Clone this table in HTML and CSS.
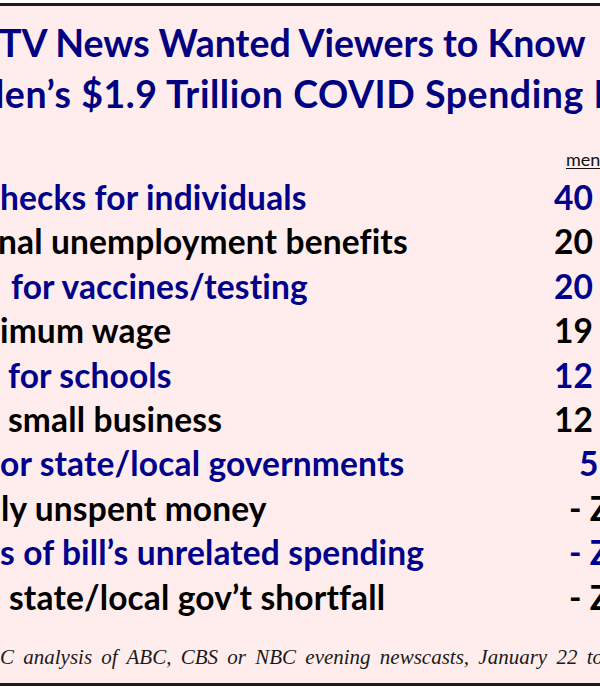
FILE: index.html
```html
<!DOCTYPE html>
<html>
<head>
<meta charset="utf-8">
<link rel="stylesheet" href="styles.css">
</head>
<body>
<div class="frame">
  <div class="title">
    <div class="tline t1">TV News Wanted Viewers to Know</div>
    <div class="tline t2">den’s $1.9 Trillion COVID Spending B</div>
  </div>
  <div class="head"><span class="mentions">mentions</span></div>
  <div class="rows">
    <div class="row blue"><span class="label l1">hecks for individuals</span><span class="num">40</span></div>
    <div class="row black"><span class="label l2">nal unemployment benefits</span><span class="num">20</span></div>
    <div class="row blue"><span class="label l3">for vaccines/testing</span><span class="num">20</span></div>
    <div class="row black"><span class="label l4">imum wage</span><span class="num">19</span></div>
    <div class="row blue"><span class="label l5">for schools</span><span class="num">12</span></div>
    <div class="row black"><span class="label l6">small business</span><span class="num">12</span></div>
    <div class="row blue"><span class="label l7">or state/local governments</span><span class="num n5">5</span></div>
    <div class="row black"><span class="label l8">ly unspent money</span><span class="num nz">- Z</span></div>
    <div class="row blue"><span class="label l9">s of bill’s unrelated spending</span><span class="num nz">- Z</span></div>
    <div class="row black"><span class="label l10">state/local gov’t shortfall</span><span class="num nz">- Z</span></div>
  </div>
  <div class="foot">C analysis of ABC, CBS or NBC evening newscasts, January 22 to</div>
</div>
</body>
</html>
```

FILE: styles.css
```css
html, body {
  margin: 0;
  padding: 0;
  background: #ffffff;
}
body {
  width: 600px;
  height: 689px;
  overflow: hidden;
}
.frame {
  margin-top: 3px;
  height: 677px;
  border-top: 3px solid #1c1c1c;
  border-bottom: 3px solid #1c1c1c;
  background: #ffeded;
  overflow: hidden;
  font-family: Lato, "Open Sans", sans-serif;
  font-weight: 700;
}
.title {
  padding-top: 11px;
  color: #000080;
  font-size: 37.5px;
  line-height: 51px;
  white-space: nowrap;
}
.t1 { margin-left: -1px; }
.t2 { margin-left: -17px; letter-spacing: 0.55px; }
.head {
  margin-top: 30px;
  height: 20px;
  padding-left: 566px;
  font-weight: 400;
  font-size: 18px;
  line-height: 20px;
  color: #111;
  white-space: nowrap;
}
.mentions { text-decoration: underline; text-underline-offset: 2px; }
.rows {
  margin-top: 6px;
  display: flex;
  flex-direction: column;
}
.row {
  display: grid;
  grid-template-columns: 554px 46px;
  height: 44.4px;
  font-size: 33.5px;
  letter-spacing: 0.15px;
  line-height: 44.4px;
  white-space: nowrap;
}
.blue { color: #00008b; }
.black { color: #000000; }
.label { overflow: hidden; }
.num { overflow: hidden; letter-spacing: 0; }
.n5 { padding-left: 25px; }
.nz { padding-left: 15px; }
.l1 { padding-left: 0; }
.l2 { text-indent: -2px; }
.l3 { padding-left: 11px; }
.l4 { padding-left: 0; }
.l5 { padding-left: 8px; }
.l6 { padding-left: 8px; }
.l7 { padding-left: 0; }
.l8 { padding-left: 1px; }
.l9 { padding-left: 0; }
.l10 { padding-left: 9px; }
.foot {
  margin-top: 26px;
  font-family: "Liberation Serif", "Times New Roman", serif;
  font-style: italic;
  font-weight: 400;
  font-size: 21px;
  word-spacing: 4px;
  line-height: 24px;
  color: #1a1a1a;
  white-space: nowrap;
}
```
